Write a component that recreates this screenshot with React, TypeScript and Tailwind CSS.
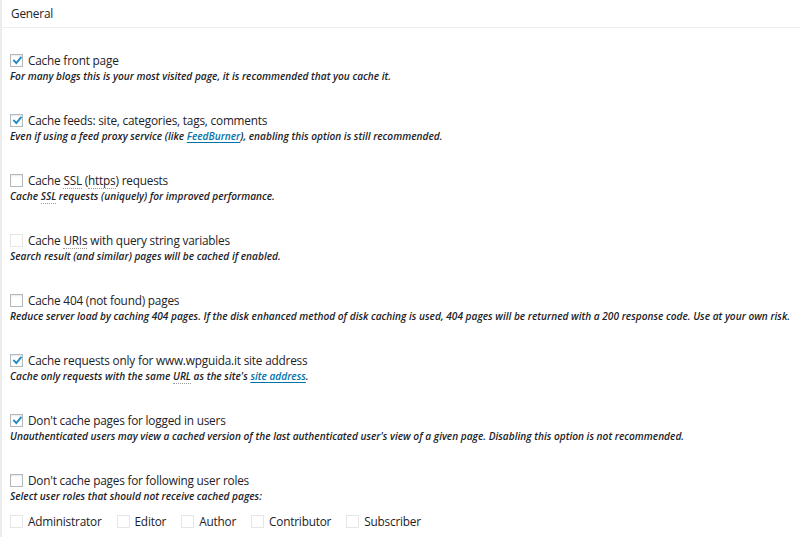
import React from "react";

function Box({ checked = false, disabled = false }: { checked?: boolean; disabled?: boolean }) {
  return (
    <span
      className={
        "relative inline-flex h-[13px] w-[13px] shrink-0 items-center justify-center border bg-white shadow-[inset_0_1px_2px_rgba(0,0,0,0.1)] " +
        (disabled ? "border-[#e6e6e6] shadow-none" : "border-[#b4b9be]")
      }
    >
      {checked && (
        <svg width="11" height="11" viewBox="0 0 11 11" className="absolute left-[1px] top-[0px]">
          <path d="M2 5.6 L4.3 8 L8.8 2.6" fill="none" stroke="#1e8cbe" strokeWidth="1.9" strokeLinecap="square" />
        </svg>
      )}
    </span>
  );
}

const Abbr = ({ children }: { children: React.ReactNode }) => (
  <span className="border-b border-dotted border-[#9a9a9a]">{children}</span>
);

const Link = ({ children }: { children: React.ReactNode }) => (
  <span className="text-[#0073aa] underline underline-offset-2">{children}</span>
);

const labelCls = "ml-[5px] text-[11.8px] tracking-[-0.2px] leading-4 text-[#1d2227]";
const descCls = "h-4 text-[10.15px] font-semibold italic leading-4 text-[#1d2227]";

function Item({
  checked,
  disabled,
  label,
  desc,
}: {
  checked?: boolean;
  disabled?: boolean;
  label: React.ReactNode;
  desc: React.ReactNode;
}) {
  return (
    <div className="mb-7">
      <div className="flex h-4 items-center">
        <Box checked={checked} disabled={disabled} />
        <span className={labelCls}>{label}</span>
      </div>
      <div className={descCls}>{desc}</div>
    </div>
  );
}

export default function App() {
  return (
    <div
      className="h-[537px] w-[800px] overflow-hidden border-l-2 border-[#ececec] bg-white"
      style={{ fontFamily: '"Open Sans", "Noto Sans", sans-serif' }}
    >
      <div className="flex h-[28px] items-center border-b border-[#eeeeee] pl-[9px] text-[11.8px] tracking-[-0.2px] text-[#1d2227]">
        General
      </div>
      <div className="pl-[8px] pt-[24px]">
        <Item
          checked
          label="Cache front page"
          desc="For many blogs this is your most visited page, it is recommended that you cache it."
        />
        <Item
          checked
          label="Cache feeds: site, categories, tags, comments"
          desc={
            <>
              Even if using a feed proxy service (like <Link>FeedBurner</Link>), enabling this option is still
              recommended.
            </>
          }
        />
        <Item
          label={
            <>
              Cache <Abbr>SSL</Abbr> (<Abbr>https</Abbr>) requests
            </>
          }
          desc={
            <>
              Cache <Abbr>SSL</Abbr> requests (uniquely) for improved performance.
            </>
          }
        />
        <Item
          disabled
          label={
            <>
              Cache <Abbr>URIs</Abbr> with query string variables
            </>
          }
          desc="Search result (and similar) pages will be cached if enabled."
        />
        <Item
          label="Cache 404 (not found) pages"
          desc="Reduce server load by caching 404 pages. If the disk enhanced method of disk caching is used, 404 pages will be returned with a 200 response code. Use at your own risk."
        />
        <Item
          checked
          label="Cache requests only for www.wpguida.it site address"
          desc={
            <>
              Cache only requests with the same <Abbr>URL</Abbr> as the site's <Link>site address</Link>.
            </>
          }
        />
        <Item
          checked
          label="Don't cache pages for logged in users"
          desc="Unauthenticated users may view a cached version of the last authenticated user's view of a given page. Disabling this option is not recommended."
        />
        <div>
          <div className="flex h-4 items-center">
            <Box />
            <span className={labelCls}>Don't cache pages for following user roles</span>
          </div>
          <div className={descCls}>Select user roles that should not receive cached pages:</div>
          <div className="mt-[9px] flex h-4 items-center">
            {["Administrator", "Editor", "Author", "Contributor", "Subscriber"].map((r) => (
              <div key={r} className="mr-[15px] flex items-center">
                <Box disabled />
                <span className={labelCls}>{r}</span>
              </div>
            ))}
          </div>
        </div>
      </div>
    </div>
  );
}
